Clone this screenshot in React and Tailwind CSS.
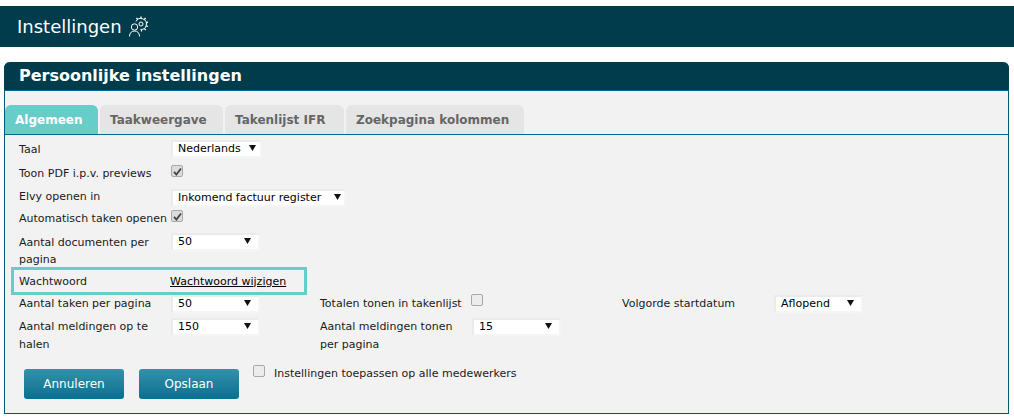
import React from 'react';

const font = { fontFamily: '"DejaVu Sans", Verdana, sans-serif' };

const SettingsIcon = () => (
  <svg width="22" height="22" viewBox="0 0 22 22" fill="none" stroke="#ffffff" strokeWidth="1" className="shrink-0">
    {/* person */}
    <circle cx="6.500" cy="11" r="3.200" />
    <path d="M1.500 20.500c0-3.500 2-5.500 5-5.500s5 2 5 5.500" />
    {/* gear */}
    <path d="M8 5.500a5.500 5.500 0 1 1 4.500 8" />
    <circle cx="13" cy="8" r="2" />
    <path
      d="M13 .5v2M17.600 1.900l-1.200 1.600M20 6.200l-1.900.5M20 10.500l-1.900-.7M17.700 14.200l-1.200-1.600M13.500 15.500v-2M8.500 1.900l1.200 1.600"
      strokeWidth="1.300"
    />
  </svg>
);

const Select = ({ value, width = 'w-[89px]', arrow = 'mr-[7px]', className = '' }) => (
  <div className={`${width} ${className} h-[18px] flex items-center justify-between bg-white border-2 border-[#ebebeb] border-r-[#f5f5f5] border-b-[#f5f5f5] pl-[5px] text-[11px] text-black`}>
    <span>{value}</span>
    <svg width="7" height="6" viewBox="0 0 7 6" className={`${arrow} mb-[3px]`}>
      <path d="M0 0h7L3.500 6z" fill="#111111" />
    </svg>
  </div>
);

const Checkbox = ({ checked, className = '' }) => (
  <div className={`w-[12px] h-[12px] rounded-[2px] border border-[#a8a8a8] flex items-center justify-center ${checked ? 'bg-[#dcdcdc]' : 'bg-[#ececec]'} ${className}`}>
    {checked && (
      <svg width="9" height="9" viewBox="0 0 9 9">
        <path d="M1 4.800 3.400 7.500 8 1.500" fill="none" stroke="#444444" strokeWidth="1.800" />
      </svg>
    )}
  </div>
);

const Tab = ({ label, width, active }) => (
  <div
    className={`${width} h-[29px] rounded-t-[6px] flex items-center pl-[10px] text-[12px] font-bold ${
      active ? 'bg-[#66cdc9] text-white' : 'bg-[#e5e5e5] text-[#666666]'
    }`}
  >
    {label}
  </div>
);

const Button = ({ label }) => (
  <button className="w-[100px] h-[30px] rounded-[3px] bg-gradient-to-b from-[#3391aa] to-[#04708f] text-white text-[12px]" style={font}>
    {label}
  </button>
);

export default function App() {
  return (
    <div className="w-[1014px] h-[418px] bg-white pt-[6px] overflow-hidden" style={font}>
      {/* Page header */}
      <div className="h-[41px] bg-[#003c4c] flex items-center pl-[17px] gap-[6px]">
        <h1 className="text-[18px] text-white">Instellingen</h1>
        <SettingsIcon />
      </div>

      {/* Panel */}
      <div className="mt-[15px] ml-[4px] w-[1005px] h-[352px] rounded-t-[6px] border border-t-0 border-[#005a70] bg-[#f2f2f2] flex flex-col">
        <div className="h-[29px] -mx-px rounded-t-[6px] bg-[#003c4c] border-b border-[#006a88] pl-[15px] flex items-center text-[16px] font-bold text-white">
          Persoonlijke instellingen
        </div>

        {/* Tabs */}
        <div className="mt-[14px] h-[30px] flex gap-[2px] border-b border-[#006a88]">
          <Tab label="Algemeen" width="w-[93px]" active />
          <Tab label="Taakweergave" width="w-[123px]" />
          <Tab label="Takenlijst IFR" width="w-[119px]" />
          <Tab label="Zoekpagina kolommen" width="w-[178px]" />
        </div>

        {/* Form */}
        <div className="text-[11px] leading-[18px] text-[#1a1a1a]">
          <div className="pl-[14px] pt-[5px] grid grid-cols-[152px_1fr] items-start">
            <span className="h-[25px] pt-px">Taal</span>
            <Select value="Nederlands" width="w-[91px]" arrow="mr-[4px]" />

            <span className="h-[23px]">Toon PDF i.p.v. previews</span>
            <Checkbox checked />

            <span className="h-[22px]">Elvy openen in</span>
            <Select value="Inkomend factuur register" width="w-[175px]" arrow="mr-[3px]" className="mt-px" />

            <span className="h-[23px]">Automatisch taken openen</span>
            <Checkbox checked />

            <span className="h-[34px] w-[140px] pt-px leading-[17px]">Aantal documenten per pagina</span>
            <Select value="50" />
          </div>

          {/* Highlighted password row */}
          <div className="ml-[6px] w-[296px] h-[28px] border-[3px] border-[#66cdc9] grid grid-cols-[151px_1fr] items-center pl-[5px] pt-px">
            <span>Wachtwoord</span>
            <a href="#" className="underline text-black">Wachtwoord wijzigen</a>
          </div>

          <div className="pl-[14px] grid grid-cols-[152px_149px_152px_150px_152px_1fr] grid-rows-[23px_42px] items-start">
            <span>Aantal taken per pagina</span>
            <Select value="50" />
            <span>Totalen tonen in takenlijst</span>
            <Checkbox className="-mt-px -ml-px" />
            <span>Volgorde startdatum</span>
            <Select value="Aflopend" />

            <span className="w-[140px]">Aantal meldingen op te halen</span>
            <Select value="150" />
            <span className="w-[140px]">Aantal meldingen tonen per pagina</span>
            <Select value="15" />
          </div>

          <div className="flex pl-[19px] pt-[9px] gap-[15px] items-start">
            <Button label="Annuleren" />
            <Button label="Opslaan" />
            <div className="flex gap-[9px] -ml-px -mt-[4px]">
              <Checkbox />
              <span>Instellingen toepassen op alle medewerkers</span>
            </div>
          </div>
        </div>
      </div>
    </div>
  );
}
